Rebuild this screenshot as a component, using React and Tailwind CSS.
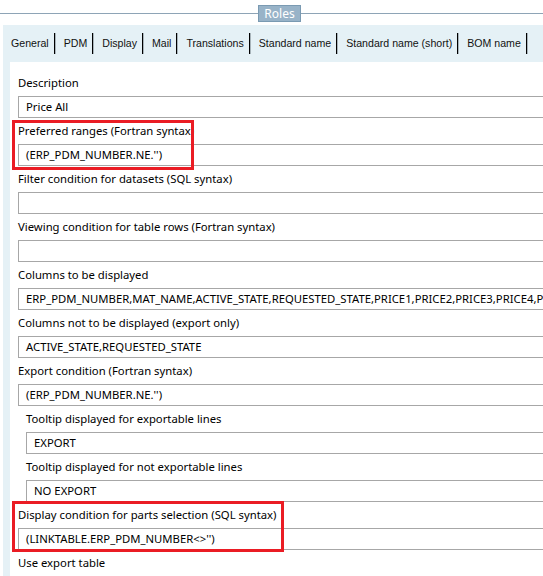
import React from "react";

const tabs = [
  "General",
  "PDM",
  "Display",
  "Mail",
  "Translations",
  "Standard name",
  "Standard name (short)",
  "BOM name",
];

function Field({ label, value, indent }) {
  return (
    <div className={"shrink-0 " + (indent ? "pl-[8px]" : "")}>
      <div className="h-[26px] flex items-center text-[11.3px] text-black leading-none pb-[1px] whitespace-nowrap">
        {label}
      </div>
      <div className="h-[22px] border-t border-l border-b border-[#a7a7a7] flex items-center pl-[7px] text-[11.3px] text-black whitespace-nowrap overflow-hidden leading-none">
        {value}
      </div>
    </div>
  );
}

export default function App() {
  return (
    <div
      className="w-[543px] h-[576px] overflow-hidden bg-white relative"
      style={{ fontFamily: '"Noto Sans", sans-serif' }}
    >
      {/* header */}
      <div className="h-[25px] flex items-start pt-[5px]">
        <div className="w-[258px] h-px bg-[#8ea4b6] mt-[8px]" />
        <div className="w-[43px] h-[17px] bg-[#98b3c8] border border-[#7a9ab2] text-white text-[12px] flex items-center justify-center leading-none">
          Roles
        </div>
        <div className="flex-1 h-px bg-[#8ea4b6] mt-[8px]" />
      </div>

      {/* panel */}
      <div className="ml-[3px] bg-[#e5f1f6] h-[551px] flex flex-col overflow-hidden">
        <div
          className="h-[37px] shrink-0 flex items-center text-[10.6px] text-[#111] whitespace-nowrap"
          style={{ fontFamily: '"Liberation Sans", Arial, sans-serif' }}
        >
          {tabs.map((t) => (
            <div key={t} className="flex items-center shrink-0">
              <span className="pl-[8px] pr-[5px] leading-none">{t}</span>
              <span className="w-[2px] h-[21px] border-l border-[#000] border-r border-r-[#a8b4ba]" />
            </div>
          ))}
        </div>
        <div className="ml-[7px] flex-1 bg-white pl-[8px] pt-[8px] flex flex-col">
          <Field label="Description" value="Price All" />
          <Field label="Preferred ranges (Fortran syntax)" value="(ERP_PDM_NUMBER.NE.'')" />
          <Field label="Filter condition for datasets (SQL syntax)" value="" />
          <Field label="Viewing condition for table rows (Fortran syntax)" value="" />
          <Field
            label="Columns to be displayed"
            value="ERP_PDM_NUMBER,MAT_NAME,ACTIVE_STATE,REQUESTED_STATE,PRICE1,PRICE2,PRICE3,PRICE4,PRICE5"
          />
          <Field
            label="Columns not to be displayed (export only)"
            value="ACTIVE_STATE,REQUESTED_STATE"
          />
          <Field label="Export condition (Fortran syntax)" value="(ERP_PDM_NUMBER.NE.'')" />
          <Field label="Tooltip displayed for exportable lines" value="EXPORT" indent />
          <Field label="Tooltip displayed for not exportable lines" value="NO EXPORT" indent />
          <Field
            label="Display condition for parts selection (SQL syntax)"
            value="(LINKTABLE.ERP_PDM_NUMBER<>'')"
          />
          <Field label="Use export table" value="" />
        </div>
      </div>

      {/* highlight overlays */}
      <div className="absolute left-[12px] top-[120px] w-[182px] h-[50px] border-[3px] border-[#ea1c24]" />
      <div className="absolute left-[12px] top-[501px] w-[272px] h-[51px] border-[3px] border-[#ea1c24]" />
    </div>
  );
}
